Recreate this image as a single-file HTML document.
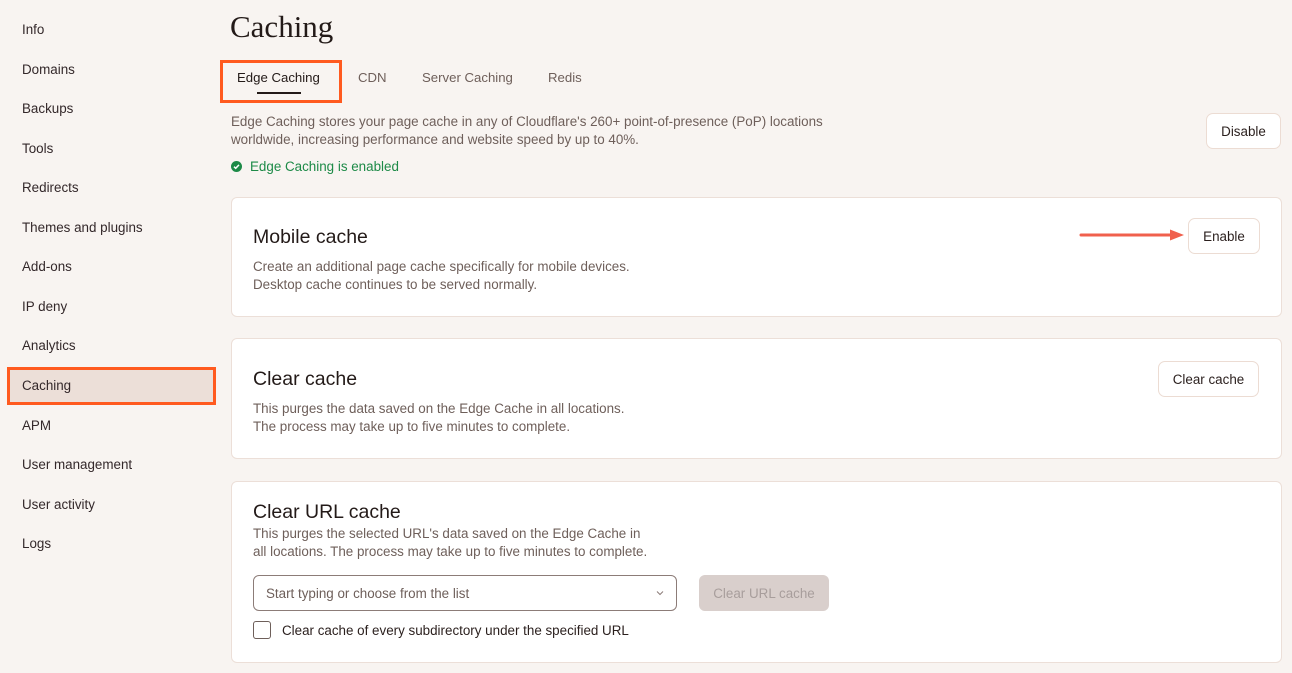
<!DOCTYPE html>
<html><head><meta charset="utf-8"><style>
*{margin:0;padding:0;box-sizing:border-box}
body{width:1292px;height:673px;background:#f8f4f1;font-family:"Liberation Sans",sans-serif;position:relative;overflow:hidden;color:#2a1f1d}
.a{position:absolute;white-space:nowrap}
.s{left:22px;font-size:13.4px;font-weight:500;color:#33282a;height:20px;line-height:20px}
.d{font-size:13.4px;color:#6e5f5a;line-height:18px}
.card{position:absolute;left:231px;width:1051px;background:#fff;border:1px solid #ecdfd8;border-radius:6px}
.h{font-size:19.5px;color:#231a18;line-height:22px}
.btn{position:absolute;background:#fff;border:1px solid #ecdcd3;border-radius:7px;font-size:13.4px;font-weight:500;color:#2a1f1d;display:flex;align-items:center;justify-content:center}
</style></head><body>
<div class="a" style="left:7px;top:367px;width:209px;height:38px;background:#ecdfd8;border:3px solid #ff5a1f"></div>
<div class="a s" style="top:20px">Info</div>
<div class="a s" style="top:60px">Domains</div>
<div class="a s" style="top:99px">Backups</div>
<div class="a s" style="top:139px">Tools</div>
<div class="a s" style="top:178px">Redirects</div>
<div class="a s" style="top:218px">Themes and plugins</div>
<div class="a s" style="top:257px">Add-ons</div>
<div class="a s" style="top:297px">IP deny</div>
<div class="a s" style="top:336px">Analytics</div>
<div class="a s" style="top:376px">Caching</div>
<div class="a s" style="top:416px">APM</div>
<div class="a s" style="top:455px">User management</div>
<div class="a s" style="top:495px">User activity</div>
<div class="a s" style="top:534px">Logs</div>

<div class="a" style="left:230px;top:7px;font-family:'Liberation Serif',serif;font-size:31px;color:#231a18;line-height:40px">Caching</div>

<div class="a" style="left:220px;top:60px;width:122px;height:43px;border:3px solid #ff5a1f"></div>
<div class="a" style="left:237px;top:69px;font-size:13.2px;font-weight:500;color:#231a18;line-height:18px">Edge Caching</div>
<div class="a" style="left:257px;top:92px;width:44px;height:2px;background:#231a18"></div>
<div class="a" style="left:358px;top:69px;font-size:13.2px;font-weight:500;color:#6e5f5a;line-height:18px">CDN</div>
<div class="a" style="left:422px;top:69px;font-size:13.2px;font-weight:500;color:#6e5f5a;line-height:18px">Server Caching</div>
<div class="a" style="left:548px;top:69px;font-size:13.2px;font-weight:500;color:#6e5f5a;line-height:18px">Redis</div>

<div class="a d" style="left:231px;top:113px">Edge Caching stores your page cache in any of Cloudflare's 260+ point-of-presence (PoP) locations<br>worldwide, increasing performance and website speed by up to 40%.</div>
<svg class="a" style="left:231px;top:161px" width="11" height="11" viewBox="0 0 11 11"><circle cx="5.5" cy="5.5" r="5.5" fill="#1d8a47"/><path d="M3 5.7l1.7 1.6 3.3-3.4" stroke="#fff" stroke-width="1.5" fill="none"/></svg>
<div class="a" style="left:250px;top:158px;font-size:13.4px;color:#1d8a47;line-height:18px">Edge Caching is enabled</div>
<div class="btn" style="left:1206px;top:113px;width:75px;height:36px">Disable</div>

<div class="card" style="top:197px;height:120px"></div>
<div class="a h" style="left:253px;top:226px">Mobile cache</div>
<div class="a d" style="left:253px;top:258px">Create an additional page cache specifically for mobile devices.<br>Desktop cache continues to be served normally.</div>
<div class="btn" style="left:1188px;top:218px;width:72px;height:36px">Enable</div>
<svg class="a" style="left:1078px;top:228px" width="108" height="14"><line x1="3" y1="7" x2="96" y2="7" stroke="#f0604d" stroke-width="3" stroke-linecap="round"/><path d="M92 1.5L106 7L92 12.5Z" fill="#f0604d"/></svg>

<div class="card" style="top:338px;height:121px"></div>
<div class="a h" style="left:253px;top:368px">Clear cache</div>
<div class="a d" style="left:253px;top:400px">This purges the data saved on the Edge Cache in all locations.<br>The process may take up to five minutes to complete.</div>
<div class="btn" style="left:1158px;top:361px;width:101px;height:36px">Clear cache</div>

<div class="card" style="top:481px;height:182px"></div>
<div class="a h" style="left:253px;top:501px">Clear URL cache</div>
<div class="a d" style="left:253px;top:525px">This purges the selected URL's data saved on the Edge Cache in<br>all locations. The process may take up to five minutes to complete.</div>
<div class="a" style="left:253px;top:575px;width:424px;height:36px;border:1px solid #8c7c78;border-radius:6px;background:#fff"></div>
<div class="a" style="left:266px;top:585px;font-size:13.4px;color:#6e5f5a;line-height:18px">Start typing or choose from the list</div>
<svg class="a" style="left:656px;top:590px" width="8" height="6"><path d="M1 1.5L4 4.5L7 1.5" stroke="#8c7c78" fill="none"/></svg>
<div class="a" style="left:699px;top:575px;width:130px;height:36px;background:#d9cfcc;border-radius:6px;font-size:13.4px;font-weight:500;color:#a89e9c;display:flex;align-items:center;justify-content:center">Clear URL cache</div>
<div class="a" style="left:253px;top:621px;width:18px;height:18px;border:1px solid #6e5f5a;border-radius:3px;background:#fff"></div>
<div class="a" style="left:282px;top:622px;font-size:13.4px;color:#2a1f1d;line-height:18px">Clear cache of every subdirectory under the specified URL</div>
</body></html>
